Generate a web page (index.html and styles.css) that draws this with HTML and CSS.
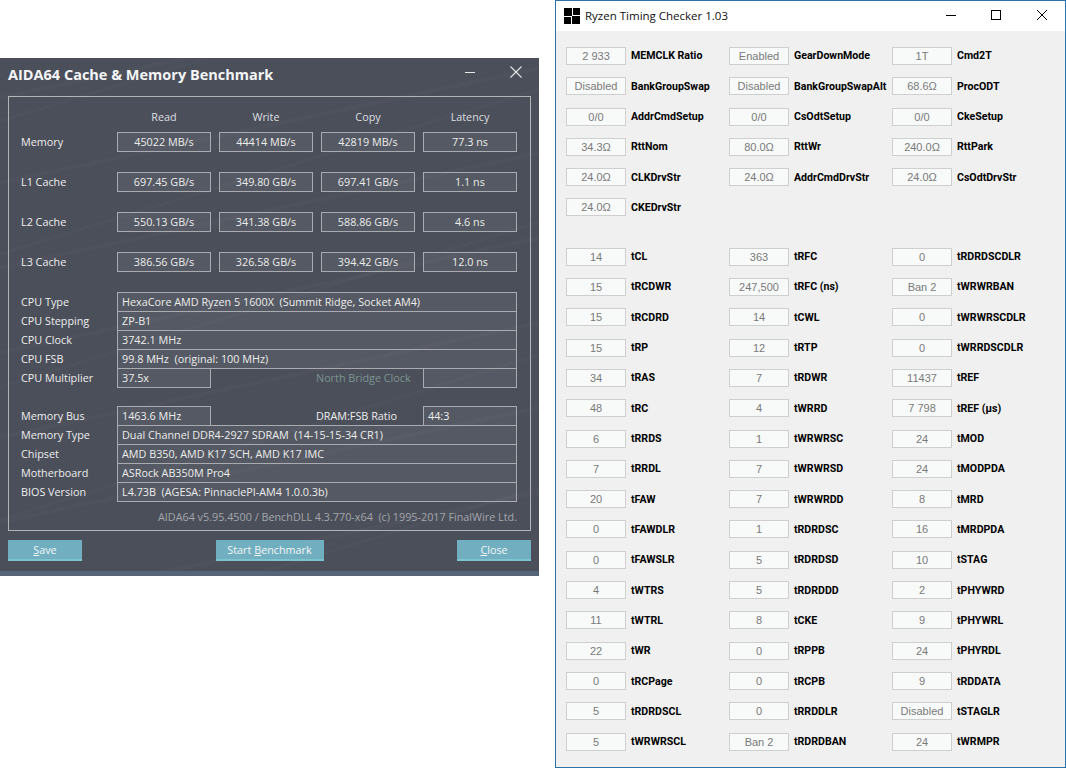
FILE: index.html
```html
<!DOCTYPE html>
<html lang="en">
<head>
<meta charset="utf-8">
<title>AIDA64 and Ryzen Timing Checker</title>
<link rel="stylesheet" href="styles.css">
</head>
<body>
<section class="aida">
  <header class="aida-title">
    <h1>AIDA64 Cache &amp; Memory Benchmark</h1>
    <svg class="aida-min" width="10" height="1" viewBox="0 0 10 1"><rect width="10" height="1" fill="#e6e7e9"/></svg>
    <svg class="aida-close" width="12" height="12" viewBox="0 0 12 12"><path d="M.5.5l11 11M11.5.5l-11 11" stroke="#e6e7e9" stroke-width="1.1" fill="none"/></svg>
  </header>
  <div class="frame">
    <div class="bench">
      <div></div><div class="hd">Read</div><div class="hd">Write</div><div class="hd">Copy</div><div class="hd">Latency</div>
    </div>
    <div class="bench rows">
      <div class="name">Memory</div><div class="box">45022 MB/s</div><div class="box">44414 MB/s</div><div class="box">42819 MB/s</div><div class="box">77.3 ns</div>
      <div class="name">L1 Cache</div><div class="box">697.45 GB/s</div><div class="box">349.80 GB/s</div><div class="box">697.41 GB/s</div><div class="box">1.1 ns</div>
      <div class="name">L2 Cache</div><div class="box">550.13 GB/s</div><div class="box">341.38 GB/s</div><div class="box">588.86 GB/s</div><div class="box">4.6 ns</div>
      <div class="name">L3 Cache</div><div class="box">386.56 GB/s</div><div class="box">326.58 GB/s</div><div class="box">394.42 GB/s</div><div class="box">12.0 ns</div>
    </div>
    <div class="info first">
      <div class="irow"><div class="name">CPU Type</div><div class="wide">HexaCore AMD Ryzen 5 1600X  (Summit Ridge, Socket AM4)</div></div>
      <div class="irow"><div class="name">CPU Stepping</div><div class="wide">ZP-B1</div></div>
      <div class="irow"><div class="name">CPU Clock</div><div class="wide">3742.1 MHz</div></div>
      <div class="irow"><div class="name">CPU FSB</div><div class="wide">99.8 MHz  (original: 100 MHz)</div></div>
      <div class="irow"><div class="name">CPU Multiplier</div><div class="split"><div class="small">37.5x</div><div class="mid dim">North Bridge Clock</div><div class="small"></div></div></div>
    </div>
    <div class="info second">
      <div class="irow"><div class="name">Memory Bus</div><div class="split"><div class="small">1463.6 MHz</div><div class="mid">DRAM:FSB Ratio</div><div class="small">44:3</div></div></div>
      <div class="irow"><div class="name">Memory Type</div><div class="wide">Dual Channel DDR4-2927 SDRAM  (14-15-15-34 CR1)</div></div>
      <div class="irow"><div class="name">Chipset</div><div class="wide">AMD B350, AMD K17 SCH, AMD K17 IMC</div></div>
      <div class="irow"><div class="name">Motherboard</div><div class="wide">ASRock AB350M Pro4</div></div>
      <div class="irow"><div class="name">BIOS Version</div><div class="wide">L4.73B  (AGESA: PinnaclePI-AM4 1.0.0.3b)</div></div>
    </div>
    <div class="foot">AIDA64 v5.95.4500 / BenchDLL 4.3.770-x64  (c) 1995-2017 FinalWire Ltd.</div>
  </div>
  <div class="buttons">
    <div class="btn btn-side"><u>S</u>ave</div>
    <div class="btn btn-start">Start <u>B</u>enchmark</div>
    <div class="btn btn-side"><u>C</u>lose</div>
  </div>
  <div class="strip"></div>
</section>

<section class="rtc">
  <header class="rtc-title">
    <svg class="rtc-logo" width="16" height="16" viewBox="0 0 16 16"><rect width="16" height="16" fill="#000"/><rect x="8" y="0" width="1" height="8" fill="#fff"/><rect x="7" y="8" width="1" height="8" fill="#fff"/><rect x="0" y="8" width="8" height="1" fill="#fff"/><rect x="8" y="7" width="8" height="1" fill="#fff"/></svg>
    <span class="rtc-name">Ryzen Timing Checker 1.03</span>
    <svg class="ctl ctl-min" width="10" height="10" viewBox="0 0 10 10"><rect y="5" width="10" height="1" fill="#000"/></svg>
    <svg class="ctl ctl-max" width="10" height="10" viewBox="0 0 10 10"><rect x=".5" y=".5" width="9" height="9" fill="none" stroke="#000"/></svg>
    <svg class="ctl ctl-x" width="10" height="10" viewBox="0 0 10 10"><path d="M0 0l10 10M10 0L0 10" stroke="#000" fill="none"/></svg>
  </header>
  <div class="rtc-body">
    <div class="tgrid">
      <div class="cell"><span class="val">2 933</span><span class="lbl">MEMCLK Ratio</span></div>
      <div class="cell"><span class="val">Enabled</span><span class="lbl">GearDownMode</span></div>
      <div class="cell"><span class="val">1T</span><span class="lbl">Cmd2T</span></div>
      <div class="cell"><span class="val">Disabled</span><span class="lbl">BankGroupSwap</span></div>
      <div class="cell"><span class="val">Disabled</span><span class="lbl">BankGroupSwapAlt</span></div>
      <div class="cell"><span class="val">68.6Ω</span><span class="lbl">ProcODT</span></div>
      <div class="cell"><span class="val">0/0</span><span class="lbl">AddrCmdSetup</span></div>
      <div class="cell"><span class="val">0/0</span><span class="lbl">CsOdtSetup</span></div>
      <div class="cell"><span class="val">0/0</span><span class="lbl">CkeSetup</span></div>
      <div class="cell"><span class="val">34.3Ω</span><span class="lbl">RttNom</span></div>
      <div class="cell"><span class="val">80.0Ω</span><span class="lbl">RttWr</span></div>
      <div class="cell"><span class="val">240.0Ω</span><span class="lbl">RttPark</span></div>
      <div class="cell"><span class="val">24.0Ω</span><span class="lbl">CLKDrvStr</span></div>
      <div class="cell"><span class="val">24.0Ω</span><span class="lbl">AddrCmdDrvStr</span></div>
      <div class="cell"><span class="val">24.0Ω</span><span class="lbl">CsOdtDrvStr</span></div>
      <div class="cell"><span class="val">24.0Ω</span><span class="lbl">CKEDrvStr</span></div>
    </div>
    <div class="tgrid tgrid-second">
      <div class="cell"><span class="val">14</span><span class="lbl">tCL</span></div>
      <div class="cell"><span class="val">363</span><span class="lbl">tRFC</span></div>
      <div class="cell"><span class="val">0</span><span class="lbl">tRDRDSCDLR</span></div>
      <div class="cell"><span class="val">15</span><span class="lbl">tRCDWR</span></div>
      <div class="cell"><span class="val">247,500</span><span class="lbl">tRFC (ns)</span></div>
      <div class="cell"><span class="val">Ban 2</span><span class="lbl">tWRWRBAN</span></div>
      <div class="cell"><span class="val">15</span><span class="lbl">tRCDRD</span></div>
      <div class="cell"><span class="val">14</span><span class="lbl">tCWL</span></div>
      <div class="cell"><span class="val">0</span><span class="lbl">tWRWRSCDLR</span></div>
      <div class="cell"><span class="val">15</span><span class="lbl">tRP</span></div>
      <div class="cell"><span class="val">12</span><span class="lbl">tRTP</span></div>
      <div class="cell"><span class="val">0</span><span class="lbl">tWRRDSCDLR</span></div>
      <div class="cell"><span class="val">34</span><span class="lbl">tRAS</span></div>
      <div class="cell"><span class="val">7</span><span class="lbl">tRDWR</span></div>
      <div class="cell"><span class="val">11437</span><span class="lbl">tREF</span></div>
      <div class="cell"><span class="val">48</span><span class="lbl">tRC</span></div>
      <div class="cell"><span class="val">4</span><span class="lbl">tWRRD</span></div>
      <div class="cell"><span class="val">7 798</span><span class="lbl">tREF (µs)</span></div>
      <div class="cell"><span class="val">6</span><span class="lbl">tRRDS</span></div>
      <div class="cell"><span class="val">1</span><span class="lbl">tWRWRSC</span></div>
      <div class="cell"><span class="val">24</span><span class="lbl">tMOD</span></div>
      <div class="cell"><span class="val">7</span><span class="lbl">tRRDL</span></div>
      <div class="cell"><span class="val">7</span><span class="lbl">tWRWRSD</span></div>
      <div class="cell"><span class="val">24</span><span class="lbl">tMODPDA</span></div>
      <div class="cell"><span class="val">20</span><span class="lbl">tFAW</span></div>
      <div class="cell"><span class="val">7</span><span class="lbl">tWRWRDD</span></div>
      <div class="cell"><span class="val">8</span><span class="lbl">tMRD</span></div>
      <div class="cell"><span class="val">0</span><span class="lbl">tFAWDLR</span></div>
      <div class="cell"><span class="val">1</span><span class="lbl">tRDRDSC</span></div>
      <div class="cell"><span class="val">16</span><span class="lbl">tMRDPDA</span></div>
      <div class="cell"><span class="val">0</span><span class="lbl">tFAWSLR</span></div>
      <div class="cell"><span class="val">5</span><span class="lbl">tRDRDSD</span></div>
      <div class="cell"><span class="val">10</span><span class="lbl">tSTAG</span></div>
      <div class="cell"><span class="val">4</span><span class="lbl">tWTRS</span></div>
      <div class="cell"><span class="val">5</span><span class="lbl">tRDRDDD</span></div>
      <div class="cell"><span class="val">2</span><span class="lbl">tPHYWRD</span></div>
      <div class="cell"><span class="val">11</span><span class="lbl">tWTRL</span></div>
      <div class="cell"><span class="val">8</span><span class="lbl">tCKE</span></div>
      <div class="cell"><span class="val">9</span><span class="lbl">tPHYWRL</span></div>
      <div class="cell"><span class="val">22</span><span class="lbl">tWR</span></div>
      <div class="cell"><span class="val">0</span><span class="lbl">tRPPB</span></div>
      <div class="cell"><span class="val">24</span><span class="lbl">tPHYRDL</span></div>
      <div class="cell"><span class="val">0</span><span class="lbl">tRCPage</span></div>
      <div class="cell"><span class="val">0</span><span class="lbl">tRCPB</span></div>
      <div class="cell"><span class="val">9</span><span class="lbl">tRDDATA</span></div>
      <div class="cell"><span class="val">5</span><span class="lbl">tRDRDSCL</span></div>
      <div class="cell"><span class="val">0</span><span class="lbl">tRRDDLR</span></div>
      <div class="cell"><span class="val">Disabled</span><span class="lbl">tSTAGLR</span></div>
      <div class="cell"><span class="val">5</span><span class="lbl">tWRWRSCL</span></div>
      <div class="cell"><span class="val">Ban 2</span><span class="lbl">tRDRDBAN</span></div>
      <div class="cell"><span class="val">24</span><span class="lbl">tWRMPR</span></div>
    </div>
  </div>
</section>
</body>
</html>
```
FILE: styles.css
```css
* { box-sizing: border-box; }
html, body { margin: 0; padding: 0; }
body { background: #fff; width: 1066px; height: 768px; position: relative; overflow: hidden; }

/* AIDA64 window */
.aida {
  position: absolute; left: 0; top: 58px; width: 539px; height: 518px;
  color: #eceded;
  font: 10.8px/20px "Open Sans", "Noto Sans", sans-serif;
  background-color: #4b4f5a;
  background-image:
    repeating-linear-gradient(168deg, rgba(255,255,255,0) 0 37px, rgba(255,255,255,.02) 37px 41px, rgba(255,255,255,0) 41px 83px),
    repeating-linear-gradient(163deg, rgba(255,255,255,0) 0 59px, rgba(255,255,255,.016) 59px 62px, rgba(255,255,255,0) 62px 127px);
}
.aida-title { height: 38px; position: relative; }
.aida-title h1 { margin: 0; position: absolute; left: 8px; top: 7px; font: 700 14.5px/20px "Open Sans", sans-serif; color: #f4f5f6; }
.aida-min { position: absolute; left: 465px; top: 14px; display: block; }
.aida-close { position: absolute; left: 510px; top: 8px; display: block; }
.frame {
  margin-left: 8px; width: 523px; height: 435px;
  border: 1px solid #b2b4b8;
  padding: 10px 0 0 12px;
}
.bench { display: grid; grid-template-columns: 88px repeat(4, 94px); column-gap: 8px; }
.rows { row-gap: 20px; margin-top: 5px; }
.hd { text-align: center; height: 20px; color: #dcdee0; }
.name { height: 20px; }
.box {
  height: 20px; text-align: center; line-height: 18px;
  border: 1px solid #a9abb0; background: rgba(255,255,255,.06);
}
.info { width: 496px; }
.first { margin-top: 20px; }
.second { margin-top: 19px; }
.irow { display: grid; grid-template-columns: 88px 400px; column-gap: 8px; height: 19px; }
.wide, .small {
  height: 20px; line-height: 18px; padding-left: 4px; white-space: pre;
  border: 1px solid #a9abb0; background: rgba(255,255,255,.06);
}
.split { display: flex; height: 20px; }
.small { width: 94px; flex: none; }
.mid { flex: 1; padding-left: 105px; line-height: 19px; }
.dim { color: #7c9490; }
.foot { margin-top: 6px; width: 496px; text-align: right; color: #a3a6ab; white-space: pre; }
.buttons { display: flex; justify-content: space-between; margin: 9px 8px 0; }
.btn {
  height: 21px; line-height: 20px; text-align: center; color: #f2f5f6;
  background: #71afc0; border-bottom: 2px solid #7cc5cf;
}
.btn-side { width: 74px; }
.btn-start { width: 108px; }
.strip { position: absolute; left: 0; right: 0; bottom: 0; height: 5px; background: #566477; }

/* Ryzen Timing Checker window */
.rtc {
  position: absolute; left: 555px; top: 0; width: 511px; height: 768px;
  border: 1px solid #2a73ab;
  background: #f0f0f0;
}
.rtc-title { height: 30px; background: #fff; position: relative; }
.rtc-logo { position: absolute; left: 8px; top: 7px; display: block; }
.rtc-name { position: absolute; left: 29px; top: 6px; font: 11.5px/18px "Open Sans", sans-serif; color: #111; }
.ctl { position: absolute; top: 9px; display: block; }
.ctl-min { left: 390px; }
.ctl-max { left: 435px; }
.ctl-x { left: 481px; }
.rtc-body { padding: 15.9px 0 0 10px; }
.tgrid { display: grid; grid-template-columns: repeat(3, 163px); grid-auto-rows: 18px; row-gap: 12.3125px; }
.tgrid-second { margin-top: 31.19px; }
.cell { display: flex; align-items: center; column-gap: 5px; height: 18px; }
.val {
  width: 60px; height: 18px; flex: none; text-align: center;
  border: 1px solid #cfcfcf; background: #f8f9f9; color: #7a7a7a;
  font: 11px/16px "Liberation Sans", Arial, sans-serif;
}
.lbl { padding-top: 1px; font: 700 10.6px/18px Roboto, sans-serif; color: #000; white-space: nowrap; }
```
